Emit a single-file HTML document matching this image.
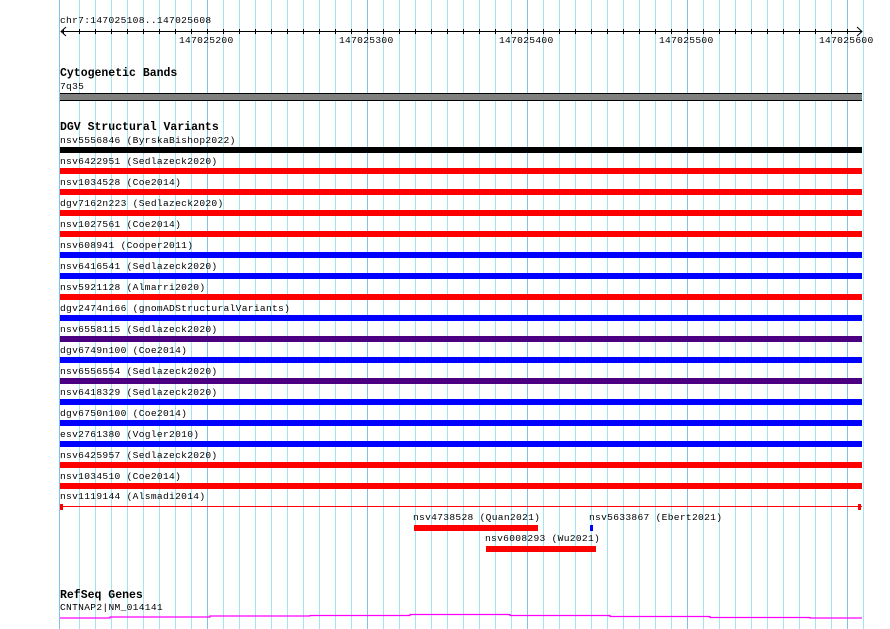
<!DOCTYPE html>
<html><head><meta charset="utf-8"><style>
*{margin:0;padding:0}
body{width:890px;height:629px;background:#fff;position:relative;overflow:hidden;font-family:"Liberation Mono","DejaVu Sans Mono",monospace;}
.a{position:absolute}
.t{position:absolute;font-size:9.6px;letter-spacing:0.3px;line-height:11px;color:#000;white-space:pre}
.h{position:absolute;font-size:11.5px;line-height:13px;font-weight:bold;white-space:pre}
.v{position:absolute;top:0;height:629px;width:1px;background:#9ee6f0}
.m{background:#7cc4ea}
.b{position:absolute;left:60px;width:802px;height:6px}
</style></head><body>
<div class="v m" style="left:59px"></div>
<div id="g"></div>
<script>
var s='';for(var x=79;x<=863;x+=16){var maj=((x-207)%160===0);s+='<div class="v'+(maj?' m':'')+'" style="left:'+x+'px"></div>';}
document.getElementById('g').innerHTML=s;
</script>
<div class="t" style="left:60px;top:15px">chr7:147025108..147025608</div>
<svg class="a" style="left:0;top:0" width="890" height="40">
<line x1="61" y1="31.5" x2="862" y2="31.5" stroke="#000"/>
<polyline points="66,27 61,31.5 66,36" fill="none" stroke="#000"/>
<polyline points="857,27 862,31.5 857,36" fill="none" stroke="#000"/>
<g id="tk" stroke="#000"></g>
</svg>
<script>
var t='';for(var x=63;x<=850;x+=16){t+='<line x1="'+(x+0.5)+'" y1="29" x2="'+(x+0.5)+'" y2="34" />';}
document.getElementById('tk').innerHTML=t;
</script>
<div class="t" style="left:179px;top:35px">147025200</div>
<div class="t" style="left:339px;top:35px">147025300</div>
<div class="t" style="left:499px;top:35px">147025400</div>
<div class="t" style="left:659px;top:35px">147025500</div>
<div class="t" style="left:819px;top:35px">147025600</div>

<div class="h" style="left:60px;top:67px">Cytogenetic Bands</div>
<div class="t" style="left:60px;top:81px">7q35</div>
<div class="a" style="left:60px;top:93px;width:802px;height:6px;background:#808080;border-top:1px solid #000;border-bottom:1px solid #000"></div>

<div class="h" style="left:60px;top:121px">DGV Structural Variants</div>
<div id="sv"></div>
<script>
var rows=[["nsv5556846 (ByrskaBishop2022)","#000"],["nsv6422951 (Sedlazeck2020)","#f00"],["nsv1034528 (Coe2014)","#f00"],["dgv7162n223 (Sedlazeck2020)","#f00"],["nsv1027561 (Coe2014)","#f00"],["nsv608941 (Cooper2011)","#00f"],["nsv6416541 (Sedlazeck2020)","#00f"],["nsv5921128 (Almarri2020)","#f00"],["dgv2474n166 (gnomADStructuralVariants)","#00f"],["nsv6558115 (Sedlazeck2020)","#4b0082"],["dgv6749n100 (Coe2014)","#00f"],["nsv6556554 (Sedlazeck2020)","#4b0082"],["nsv6418329 (Sedlazeck2020)","#00f"],["dgv6750n100 (Coe2014)","#00f"],["esv2761380 (Vogler2010)","#00f"],["nsv6425957 (Sedlazeck2020)","#f00"],["nsv1034510 (Coe2014)","#f00"]];
var h='';for(var i=0;i<rows.length;i++){var y=135+21*i;h+='<div class="t" style="left:60px;top:'+y+'px">'+rows[i][0]+'</div><div class="b" style="top:'+(y+12)+'px;background:'+rows[i][1]+'"></div>';}
document.getElementById('sv').innerHTML=h;
</script>
<div class="t" style="left:60px;top:491px">nsv1119144 (Alsmadi2014)</div>
<div class="a" style="left:60px;top:506px;width:802px;height:1px;background:#f00"></div>
<div class="a" style="left:60px;top:504px;width:3px;height:6px;background:#f00"></div>
<div class="a" style="left:858px;top:504px;width:3px;height:6px;background:#f00"></div>

<div class="t" style="left:413px;top:512px">nsv4738528 (Quan2021)</div>
<div class="a" style="left:414px;top:525px;width:124px;height:6px;background:#f00"></div>
<div class="t" style="left:589px;top:512px">nsv5633867 (Ebert2021)</div>
<div class="a" style="left:590px;top:525px;width:3px;height:6px;background:#00f"></div>
<div class="t" style="left:485px;top:533px">nsv6008293 (Wu2021)</div>
<div class="a" style="left:486px;top:546px;width:110px;height:6px;background:#f00"></div>

<div class="h" style="left:60px;top:589px">RefSeq Genes</div>
<div class="t" style="left:60px;top:602px">CNTNAP2|NM_014141</div>
<svg class="a" style="left:0;top:0" width="890" height="629">
<polyline points="60,618 110,618 110,617 210,617 210,616 310,616 310,615.5 410,615.5 410,614.5 510,614.5 510,615.5 610,615.5 610,616.5 710,616.5 710,617.5 810,617.5 810,618 862,618" fill="none" stroke="#f0f" stroke-width="1.2"/>
</svg>
</body></html>
